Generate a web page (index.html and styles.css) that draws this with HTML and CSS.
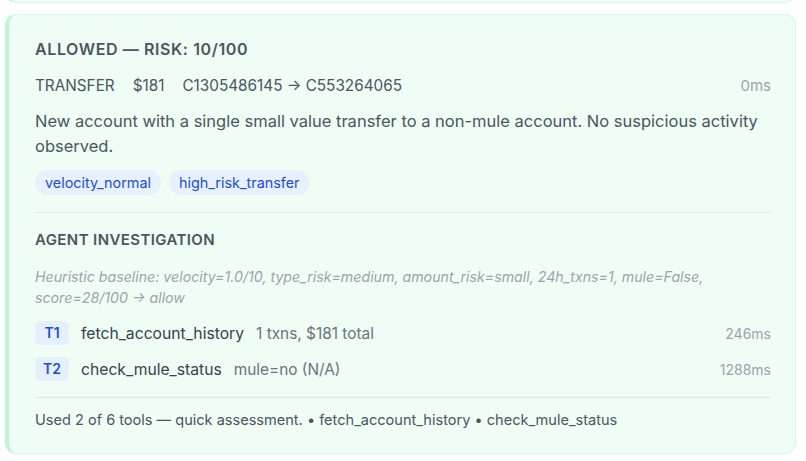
FILE: index.html
```html
<!DOCTYPE html>
<html>
<head>
<meta charset="utf-8">
<link rel="stylesheet" href="styles.css">
</head>
<body>
<div class="stack">
  <div class="card card-prev"></div>
  <div class="card">
    <div class="title">ALLOWED — RISK: 10/100</div>
    <div class="txn">
      <div class="txn-main">
        <span>TRANSFER</span>
        <span>$181</span>
        <span>C1305486145 → C553264065</span>
      </div>
      <span class="muted">0ms</span>
    </div>
    <p class="desc">New account with a single small value transfer to a non-mule account. No suspicious activity observed.</p>
    <div class="tags">
      <span class="tag">velocity_normal</span>
      <span class="tag">high_risk_transfer</span>
    </div>
    <div class="section">
      <div class="section-title">AGENT INVESTIGATION</div>
      <p class="baseline">Heuristic baseline: velocity=1.0/10, type_risk=medium, amount_risk=small, 24h_txns=1, mule=False, score=28/100 → allow</p>
      <div class="tools">
        <div class="tool">
          <span class="badge">T1</span>
          <span class="tool-name">fetch_account_history</span>
          <span class="tool-result">1 txns, $181 total</span>
          <span class="tool-ms">246ms</span>
        </div>
        <div class="tool">
          <span class="badge">T2</span>
          <span class="tool-name">check_mule_status</span>
          <span class="tool-result">mule=no (N/A)</span>
          <span class="tool-ms">1288ms</span>
        </div>
      </div>
      <div class="footer">Used 2 of 6 tools — quick assessment. • fetch_account_history • check_mule_status</div>
    </div>
  </div>
</div>
</body>
</html>
```

FILE: styles.css
```css
* { box-sizing: border-box; }
html, body { margin: 0; padding: 0; background: #ffffff; }
body {
  font-family: Inter, "Noto Sans", "Liberation Sans", sans-serif;
  color: #4b5563;
}
.stack {
  padding-left: 5px;
  width: 796px;
  display: flex;
  flex-direction: column;
  gap: 11px;
  margin-top: -40px;
}
.card {
  background: #f0fdf4;
  border: 1px solid #d1fae5;
  border-left: 4px solid #bbf7d0;
  border-radius: 11px;
  padding: 23px 24px 22px 26px;
}
.card-prev { height: 43px; padding: 0; }
.title {
  font-size: 16px;
  line-height: 22px;
  font-weight: 600;
  letter-spacing: 0.6px;
  color: #4b5563;
}
.txn {
  margin-top: 14px;
  display: flex;
  justify-content: space-between;
  align-items: center;
  font-size: 15.3px;
  line-height: 24px;
}
.txn-main { display: flex; gap: 18px; }
.muted { color: #9ca3af; font-size: 15px; }
.desc {
  margin: 11px 0 0;
  font-size: 16.5px;
  line-height: 25px;
  color: #4b5563;
}
.tags { margin-top: 11px; display: flex; gap: 8px; }
.tag {
  background: #e7f0fd;
  color: #1d4ed8;
  font-size: 14.4px;
  line-height: 25px;
  padding: 0 10px;
  border-radius: 13px;
}
.section {
  margin-top: 17px;
  border-top: 1px solid #dfe7e2;
  padding-top: 16px;
}
.section-title {
  font-size: 15px;
  line-height: 22px;
  font-weight: 600;
  letter-spacing: 0.4px;
  color: #4b5563;
}
.baseline {
  margin: 15px 0 0;
  font-size: 14.2px;
  line-height: 21px;
  font-style: italic;
  color: #9ca3af;
}
.tools { margin-top: 13px; display: flex; flex-direction: column; gap: 12px; }
.tool { display: flex; align-items: center; height: 24px; font-size: 15.7px; }
.badge {
  background: #e5effd;
  color: #1d4ed8;
  font-weight: 600;
  font-size: 14px;
  line-height: 24px;
  width: 34px;
  text-align: center;
  border-radius: 5px;
  margin-right: 12px;
}
.tool-name { color: #374151; margin-right: 12px; }
.tool-result { color: #6b7280; font-size: 15.4px; flex: 1; }
.tool-ms { color: #9ca3af; font-size: 14px; }
.footer {
  margin-top: 16px;
  border-top: 1px solid #dfe7e2;
  padding-top: 11px;
  font-size: 14.55px;
  line-height: 22px;
  color: #4b5563;
}
```
